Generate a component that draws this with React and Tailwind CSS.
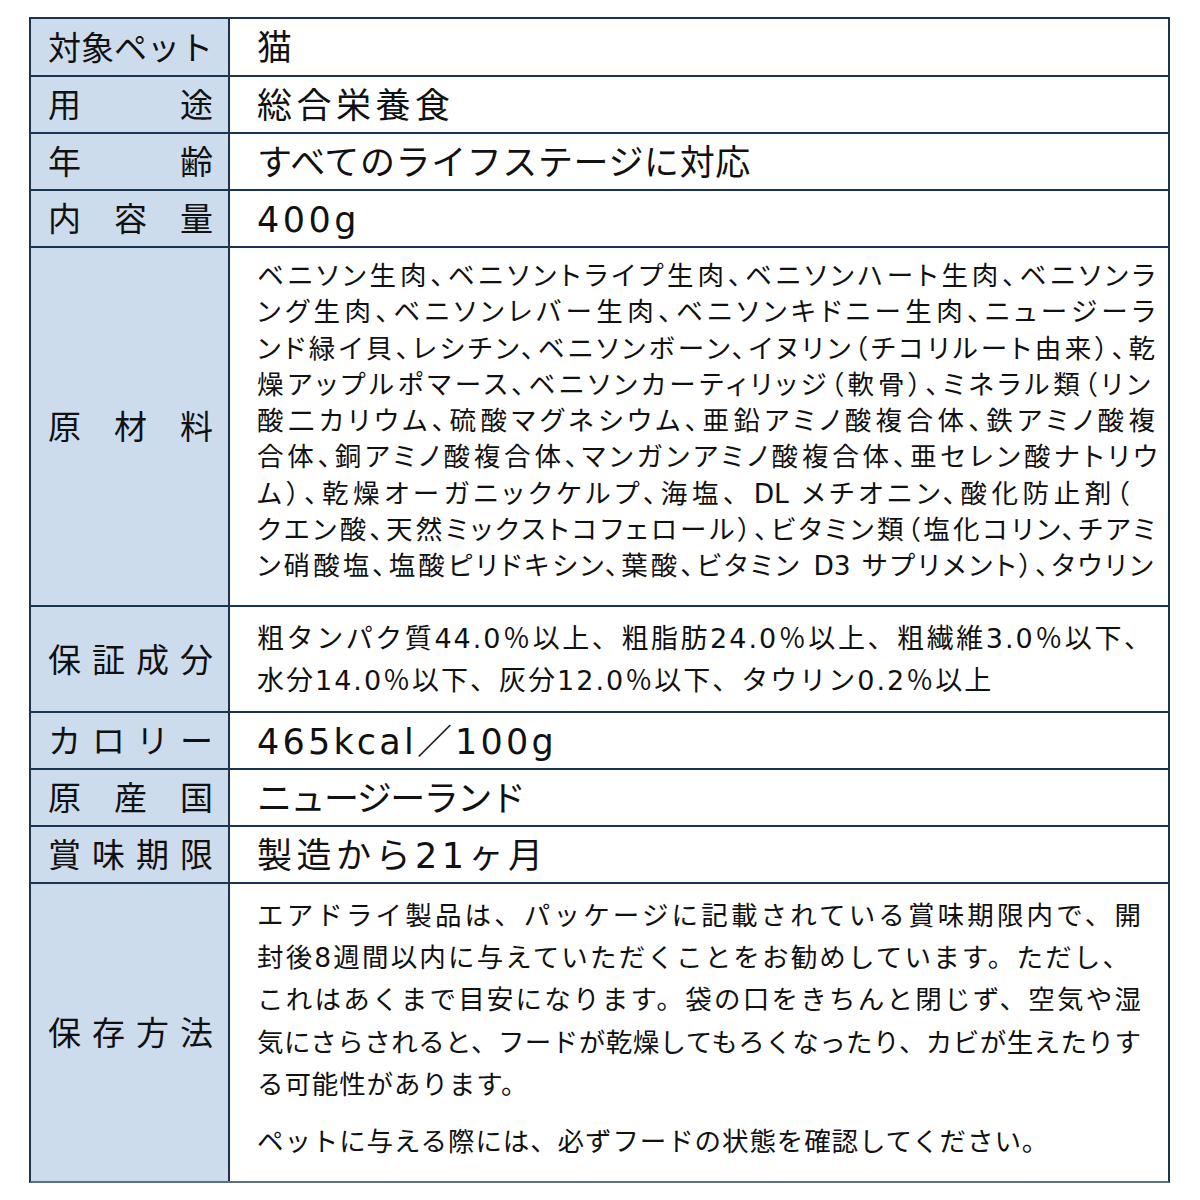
import React from "react";

const B = "border-[#1c3454]";

const Label = ({ text }) => (
  <div className={`flex items-center bg-[#cddcec] border-r-2 ${B} pl-[17px] pr-[15px] pt-[2px]`}>
    <div className="flex w-full justify-between text-[33px] leading-none">
      {text.split("").map((c, i) => (
        <span key={i}>{c}</span>
      ))}
    </div>
  </div>
);

const Row = ({ label, first, height, children }) => (
  <div className={`grid grid-cols-[199px_1fr] ${first ? "" : `border-t-2 ${B}`} ${height}`}>
    <Label text={label} />
    {children}
  </div>
);

const Single = ({ tr = "tracking-[1px]", children }) => (
  <div className={`flex items-center pl-[27px] pt-[3px] text-[35px] leading-none ${tr}`}>{children}</div>
);

// one justified line of a multi-line cell
const J = ({ w, children }) => (
  <div className={`whitespace-nowrap [text-align-last:justify] ${w}`}>{children}</div>
);

export default function App() {
  return (
    <div className="min-h-[1200px] bg-white pt-[17px] pl-[29px] text-[#111] font-['DejaVu_Sans','Noto_Sans_CJK_JP',sans-serif]">
      <div className={`w-[1141px] border-2 ${B} border-b-[#5f6f8a]`}>
        <Row label="対象ペット" first height="h-[56px]">
          <Single>猫</Single>
        </Row>
        <Row label="用途" height="h-[57px]">
          <Single tr="tracking-[4.5px]">総合栄養食</Single>
        </Row>
        <Row label="年齢" height="h-[57px]">
          <Single tr="tracking-[0.6px]">すべてのライフステージに対応</Single>
        </Row>
        <Row label="内容量" height="h-[57px]">
          <Single tr="tracking-[3.5px]">400g</Single>
        </Row>
        <Row label="原材料" height="h-[359px]">
          <div className="pl-[27px] pt-[10px] text-[26.5px] leading-[36.25px] [font-feature-settings:'palt']">
            <J w="w-[898px]">ベニソン生肉、ベニソントライプ生肉、ベニソンハート生肉、ベニソンラ</J>
            <J w="w-[898px]">ング生肉、ベニソンレバー生肉、ベニソンキドニー生肉、ニュージーラ</J>
            <J w="w-[898px]">ンド緑イ貝、レシチン、ベニソンボーン、イヌリン（チコリルート由来）、乾</J>
            <J w="w-[893px]">燥アップルポマース、ベニソンカーティリッジ（軟骨）、ミネラル類（リン</J>
            <J w="w-[898px]">酸二カリウム、硫酸マグネシウム、亜鉛アミノ酸複合体、鉄アミノ酸複</J>
            <J w="w-[900px]">合体、銅アミノ酸複合体、マンガンアミノ酸複合体、亜セレン酸ナトリウ</J>
            <J w="w-[872px]">ム）、乾燥オーガニックケルプ、海塩、 DL メチオニン、酸化防止剤（</J>
            <J w="w-[898px]">クエン酸、天然ミックストコフェロール）、ビタミン類（塩化コリン、チアミ</J>
            <J w="w-[896px]">ン硝酸塩、塩酸ピリドキシン、葉酸、ビタミン D3 サプリメント）、タウリン</J>
          </div>
        </Row>
        <Row label="保証成分" height="h-[106px]">
          <div className="pl-[27px] pt-[11px] text-[27px] leading-[42px] tracking-[2px]">
            <J w="w-[896px]">粗タンパク質44.0％以上、粗脂肪24.0％以上、粗繊維3.0％以下、</J>
            <div className="whitespace-nowrap">水分14.0％以下、灰分12.0％以下、タウリン0.2％以上</div>
          </div>
        </Row>
        <Row label="カロリー" height="h-[57px]">
          <Single tr="tracking-[3.2px]">465kcal／100g</Single>
        </Row>
        <Row label="原産国" height="h-[57px]">
          <Single tr="tracking-[-1.5px]">ニュージーランド</Single>
        </Row>
        <Row label="賞味期限" height="h-[57px]">
          <Single tr="tracking-[4.5px]">製造から21ヶ月</Single>
        </Row>
        <Row label="保存方法" height="h-[299px]">
          <div className="pl-[27px] pt-[11px] text-[26.5px] leading-[42.2px]">
            <J w="w-[884px]">エアドライ製品は、パッケージに記載されている賞味期限内で、開</J>
            <J w="w-[872px]">封後8週間以内に与えていただくことをお勧めしています。ただし、</J>
            <J w="w-[884px]">これはあくまで目安になります。袋の口をきちんと閉じず、空気や湿</J>
            <J w="w-[884px]">気にさらされると、フードが乾燥してもろくなったり、カビが生えたりす</J>
            <div className="whitespace-nowrap tracking-[0.9px]">る可能性があります。</div>
            <div className="mt-[15px] whitespace-nowrap tracking-[0.9px]">
              ペットに与える際には、必ずフードの状態を確認してください。
            </div>
          </div>
        </Row>
      </div>
    </div>
  );
}
